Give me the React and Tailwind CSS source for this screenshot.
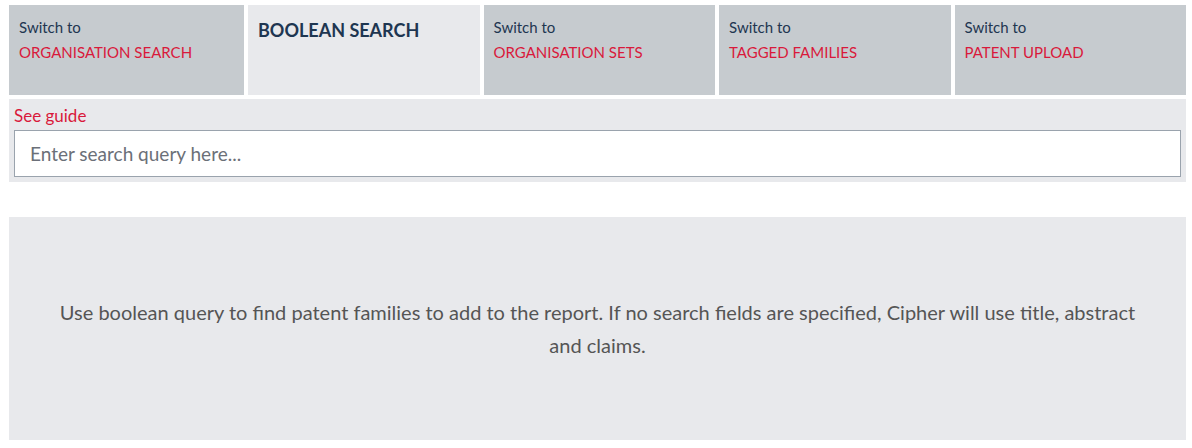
export default function App() {
  const tabs = [
    { label: "ORGANISATION SEARCH" },
    { active: true, label: "BOOLEAN SEARCH" },
    { label: "ORGANISATION SETS" },
    { label: "TAGGED FAMILIES" },
    { label: "PATENT UPLOAD" },
  ];
  return (
    <div
      className="w-[1192px] h-[448px] bg-white pl-[9px] pr-[6px] pt-[5px]"
      style={{ fontFamily: '"Source Sans Pro", Lato, "Noto Sans", sans-serif' }}
    >
      <div className="grid grid-cols-[235px_1fr_1fr_1fr_1fr] gap-[4px] h-[90px]">
        {tabs.map((t, i) =>
          t.active ? (
            <div key={i} className="bg-[#e8e9ec] px-[10px] pt-[13px]">
              <div className="text-[18px] font-bold text-[#1e3651] leading-[24px]">{t.label}</div>
            </div>
          ) : (
            <div key={i} className="bg-[#c6cbcf] px-[10px] pt-[10px] cursor-pointer">
              <div className="text-[15px] text-[#1e3651] leading-[25px]">Switch to</div>
              <div className="text-[15px] text-[#d9193b] leading-[25px]">{t.label}</div>
            </div>
          )
        )}
      </div>
      <div className="mt-[4px] bg-[#e8e9ec] px-[5px] pt-[7px] pb-[5px]">
        <div className="text-[17px] text-[#d9193b] leading-[20px] mb-[4px]">See guide</div>
        <input
          autoFocus
          className="block w-full h-[47px] bg-white border border-[#9aa3ad] px-[15px] text-[19px] text-[#333] placeholder-[#6b7078] outline-none caret-[#333]"
          placeholder="Enter search query here..."
        />
      </div>
      <div className="mt-[35px] bg-[#e8e9ec] h-[223px] flex items-center justify-center px-[45px]">
        <p className="text-center text-[20px] leading-[33px] text-[#555]">
          Use boolean query to find patent families to add to the report. If no search fields are specified, Cipher will use title, abstract and claims.
        </p>
      </div>
    </div>
  );
}
